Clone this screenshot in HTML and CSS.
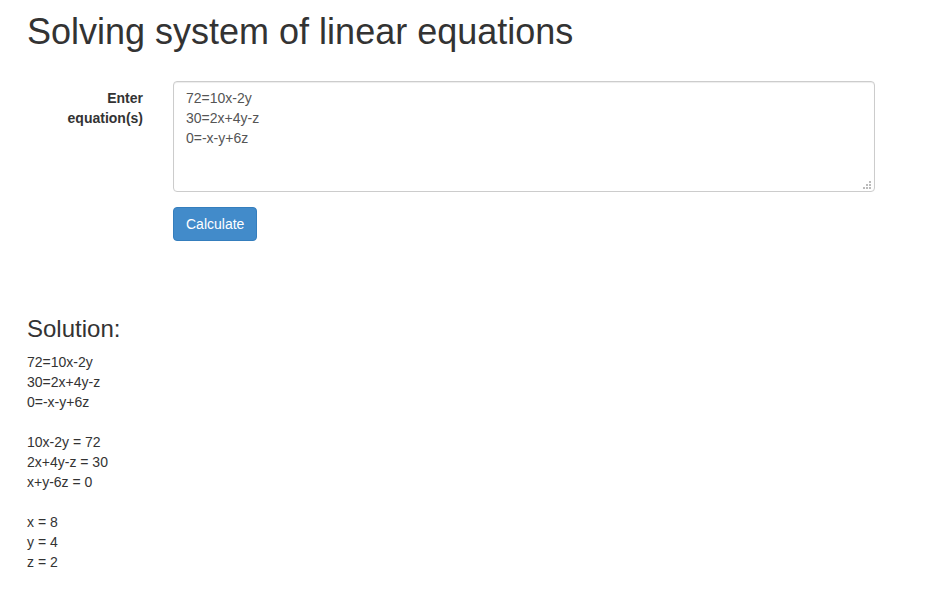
FILE: index.html
```html
<!DOCTYPE html>
<html lang="en">
<head>
<meta charset="utf-8">
<title>Solving system of linear equations</title>
<link rel="stylesheet" href="styles.css">
</head>
<body>
<div class="page">
  <h1 class="title">Solving system of linear equations</h1>
  <form class="form">
    <div class="form-row">
      <label class="form-label" for="eq">Enter equation(s)</label>
      <div class="input-wrap">
        <textarea id="eq" class="form-input">72=10x-2y
30=2x+4y-z
0=-x-y+6z</textarea>
        <svg class="grip" width="8" height="8" viewBox="0 0 8 8" aria-hidden="true">
          <rect x="6" y="0" width="2" height="2"/>
          <rect x="3" y="3" width="2" height="2"/>
          <rect x="6" y="3" width="2" height="2"/>
          <rect x="0" y="6" width="2" height="2"/>
          <rect x="3" y="6" width="2" height="2"/>
          <rect x="6" y="6" width="2" height="2"/>
        </svg>
      </div>
    </div>
    <div class="form-row">
      <span class="form-spacer"></span>
      <div><button type="button" class="btn">Calculate</button></div>
    </div>
  </form>
  <h3 class="solution-title">Solution:</h3>
  <div class="solution">
    72=10x-2y<br>30=2x+4y-z<br>0=-x-y+6z<br><br>10x-2y = 72<br>2x+4y-z = 30<br>x+y-6z = 0<br><br>x = 8<br>y = 4<br>z = 2
  </div>
</div>
</body>
</html>
```
FILE: styles.css
```css
html, body {
  margin: 0;
  padding: 0;
  background: #fff;
}
body {
  font-family: "Liberation Sans", Arial, sans-serif;
  font-size: 14px;
  line-height: 20px;
  color: #333;
}
.page {
  padding: 0 27px;
}
.title {
  font-size: 36px;
  font-weight: 500;
  line-height: 1.1;
  margin: 12px 0 10px;
}
.form {
  margin: 29px 0 0;
}
.form-row {
  display: grid;
  grid-template-columns: 116px 702px;
  column-gap: 30px;
  margin-bottom: 15px;
}
.form-label {
  justify-self: end;
  max-width: 90px;
  font-weight: bold;
  text-align: right;
  padding-top: 7px;
}
.input-wrap {
  position: relative;
  height: 111px;
}
.form-input {
  display: block;
  box-sizing: border-box;
  width: 702px;
  height: 111px;
  margin: 0;
  padding: 6px 12px;
  border: 1px solid #ccc;
  border-radius: 4px;
  box-shadow: inset 0 1px 1px rgba(0,0,0,.075);
  font-family: "Liberation Sans", Arial, sans-serif;
  font-size: 14px;
  line-height: 20px;
  color: #555;
  background: #fff;
  resize: none;
}
.grip {
  position: absolute;
  right: 4px;
  bottom: 3px;
  fill: #bbb;
}
.btn {
  box-sizing: border-box;
  height: 34px;
  padding: 6px 12px;
  font-family: "Liberation Sans", Arial, sans-serif;
  font-size: 14px;
  line-height: 20px;
  color: #fff;
  background: #428bca;
  border: 1px solid #357ebd;
  border-radius: 4px;
  cursor: pointer;
}
.solution-title {
  font-size: 24px;
  font-weight: 500;
  line-height: 1.1;
  margin: 75px 0 10px;
}
.solution {
  margin: 0;
}
```
